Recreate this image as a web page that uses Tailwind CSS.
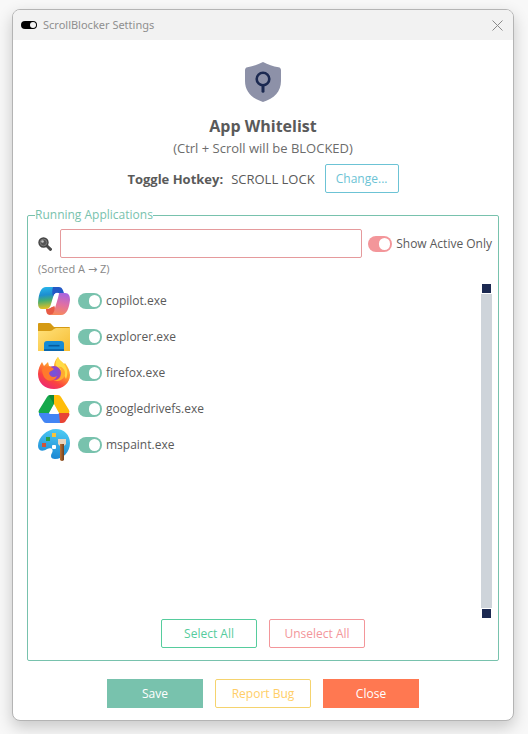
<!DOCTYPE html>
<html lang="en">
<head>
<meta charset="utf-8">
<meta name="viewport" content="width=device-width, initial-scale=1">
<title>ScrollBlocker Settings</title>
<script src="https://cdn.jsdelivr.net/npm/@tailwindcss/browser@4"></script>
</head>
<body class="flex min-h-screen flex-col bg-[#f8f8f8] pt-[9px] pr-[14px] pb-[13px] pl-3 font-['Open_Sans','Noto_Sans',sans-serif] text-xs leading-4 text-[#5a5a5a]">
<div class="flex flex-1 flex-col overflow-hidden rounded-lg border border-[#b4b4b4] bg-white shadow-[0_6px_16px_rgba(0,0,0,0.2)]">
  <header class="flex h-[30px] items-center bg-[#f2f2f2] pr-[9px] pl-2 text-[#8f8f8f]">
    <svg class="h-2 w-4" viewBox="0 0 16 8" aria-hidden="true"><rect width="16" height="8" rx="4" fill="#000"/><circle cx="12" cy="4" r="3" fill="#f2f2f2"/></svg>
    <h1 class="ml-1.5 flex-1 font-['Noto_Sans','Open_Sans',sans-serif] text-[11px]">ScrollBlocker Settings</h1>
    <button type="button" aria-label="Close window" class="p-px"><svg class="size-[11px]" viewBox="0 0 11 11" fill="none" stroke="#8a8a8a" stroke-width="1" aria-hidden="true"><path d="M.5.5l10 10M10.500.5l-10 10"/></svg></button>
  </header>

  <main class="flex flex-1 flex-col px-3.5 pt-[22px] pb-3">
    <section class="flex flex-col items-center">
      <svg class="h-10 w-9" viewBox="0 0 36 40" fill="none" aria-hidden="true">
        <path d="M18 0c5 2.600 10 4.400 15.500 5.200 1.600.3 2.500 1.400 2.500 3V19c0 10.500-7 17.800-18 21C7 36.800 0 29.500 0 19V8.200c0-1.600.9-2.700 2.500-3C8 4.400 13 2.600 18 0z" fill="#8d91a8"/>
        <circle cx="18" cy="17" r="6.300" stroke="#1b2951" stroke-width="2.600"/>
        <path d="M18 23.500v5.700" stroke="#1b2951" stroke-width="3" stroke-linecap="round"/>
      </svg>
      <h2 class="mt-3 text-base leading-6 font-bold">App Whitelist</h2>
      <p class="mt-[2px] text-[13px] text-[#6c6c6c]">(Ctrl + Scroll will be BLOCKED)</p>
      <div class="mt-2 flex items-center">
        <span class="text-[13px] font-bold">Toggle Hotkey:</span>
        <span class="ml-2 text-[13px]">SCROLL LOCK</span>
        <button type="button" class="ml-2.5 h-[29px] w-[74px] rounded-xs border border-[#6cc3d5] text-[#6cc3d5]">Change...</button>
      </div>
    </section>

    <fieldset class="mt-3.5 flex flex-1 flex-col rounded-xs border border-[#78c2ad] px-1.5 pb-3">
      <legend class="ml-px text-[#78c2ad]">Running Applications</legend>
      <div class="mt-1.5 flex items-center pl-1">
        <label for="search" aria-label="Search applications">
          <svg class="size-[14px]" viewBox="0 0 14 14" aria-hidden="true"><path d="M8.500 8.500l4 3.800" stroke="#4b4b4b" stroke-width="3" stroke-linecap="round"/><circle cx="5.500" cy="5.500" r="4.500" fill="#555" stroke="#444" stroke-width="1.400"/><circle cx="5.500" cy="5.500" r="3.300" fill="none" stroke="#888" stroke-width=".7"/><circle cx="4.500" cy="4.500" r="1.300" fill="#c4c4c4"/></svg>
        </label>
        <input id="search" type="text" class="ml-2 h-[29px] min-w-0 flex-1 rounded-xs border border-[#e59a9c] px-2 outline-none">
        <label class="ml-1.5 flex items-center gap-1">
          <input type="checkbox" checked class="flex h-4 w-6 shrink-0 appearance-none items-center justify-end rounded-full bg-[#f3969a] pr-0.5 before:h-3 before:w-[11px] before:rounded-full before:bg-white">
          <span>Show Active Only</span>
        </label>
      </div>
      <p class="mt-[3px] h-4 pl-1 text-[11px] text-[#888]">(Sorted A <span class="font-['DejaVu_Sans',sans-serif]">→</span> Z)</p>
      <div class="mt-1.5 flex h-84">
        <ul class="flex-1 pl-1">
          <li class="flex h-9 items-center">
            <svg class="h-7 w-8" viewBox="0 0 32 28" aria-hidden="true">
              <defs>
                <linearGradient id="ca" x1=".4" y1="0" x2=".5" y2="1"><stop stop-color="#28b4ea"/><stop offset=".35" stop-color="#1d8ed0"/><stop offset=".6" stop-color="#45ad72"/><stop offset="1" stop-color="#f2c21c"/></linearGradient>
                <linearGradient id="cb" x1=".6" y1="0" x2=".4" y2="1"><stop stop-color="#a765e0"/><stop offset=".5" stop-color="#e06fa4"/><stop offset="1" stop-color="#f7895c"/></linearGradient>
              </defs>
              <path d="M8 0h12l-4 7-3 10q-1 5-5 5H4Q0 22 0 16 1 0 8 0z" fill="url(#ca)"/>
              <path d="M15 0h6c3 0 4 3 5 6h-6c-3 0-4 1-5 4-1-4-1-7 0-10z" fill="#2458c5"/>
              <path d="M21 6h6c4 0 5 3 5 7-1 8-3 15-9 15H13l4-7 3-10q1-4 1-5z" fill="url(#cb)"/>
              <path d="M8 22c4 0 6-2 8-4l1 3c-1 4-2 7-5 7s-4-3-4-6z" fill="#e75b45"/>
              <path d="M16 8q2-3 4-2l-2 10q-1 4-5 4z" fill="#fff"/>
            </svg>
            <label class="ml-2 flex items-center gap-1"><input type="checkbox" checked class="flex h-4 w-6 appearance-none items-center justify-end rounded-full bg-[#78c2ad] pr-0.5 before:h-3 before:w-[11px] before:rounded-full before:bg-white"><span>copilot.exe</span></label>
          </li>
          <li class="flex h-9 items-center">
            <svg class="h-7 w-8" viewBox="0 0 32 28" aria-hidden="true">
              <defs><linearGradient id="fo" x1="0" y1="0" x2="1" y2="1"><stop stop-color="#ffe17b"/><stop offset="1" stop-color="#f7bd32"/></linearGradient></defs>
              <path d="M0 1q0-1 1-1h10q2 0 3 2l2 2h15q1 0 1 1v6H0z" fill="#d59a13"/>
              <path d="M0 8h12q2 0 4-2l2-1h14v23H0z" fill="url(#fo)"/>
              <path d="M6 28v-7q0-3 3-3h14q3 0 3 3v7z" fill="#168bd5"/><path d="M6 26h20v2H6z" fill="#0b67ad"/>
              <path d="M10.500 22.700h11" stroke="#075b9c" stroke-width="1.600"/>
            </svg>
            <label class="ml-2 flex items-center gap-1"><input type="checkbox" checked class="flex h-4 w-6 appearance-none items-center justify-end rounded-full bg-[#78c2ad] pr-0.5 before:h-3 before:w-[11px] before:rounded-full before:bg-white"><span>explorer.exe</span></label>
          </li>
          <li class="flex h-9 items-center">
            <svg class="size-8" viewBox="0 0 32 32" aria-hidden="true">
              <defs>
                <linearGradient id="fx" x1=".8" y1="0" x2=".2" y2="1"><stop stop-color="#ffd43b"/><stop offset=".4" stop-color="#ff982d"/><stop offset=".7" stop-color="#fb443f"/><stop offset="1" stop-color="#e9247d"/></linearGradient>
                <radialGradient id="fp"><stop stop-color="#6f55df"/><stop offset="1" stop-color="#9b42be"/></radialGradient>
              </defs>
              <path d="M20 0c1 3 3 4 6 7l1-1c3 4 5 8 5 12 0 8-7 14-16 14S0 26 0 17C0 12 2 8 4 5l2 4 4-4 1 4 5 1C16 6 17 3 20 0z" fill="url(#fx)"/>
              <path d="M20 0c1 3 3 4 6 7 4 5 4 10 2 15-2-4-3-8-8-11-4-2-2-8 0-11z" fill="#ffdb45"/>
              <circle cx="16" cy="16" r="7" fill="url(#fp)"/>
              <path d="M4 12c3-3 6-3 9-2l3 2c-2 2-4 2-5 4 1 4 4 5 8 3-2 6-10 6-13 1-1-2-2-5-2-8z" fill="#ff7a2c"/>
              <path d="M20 10c3 1 4 4 3 7 0 5-4 7-8 6 7 3 13-2 12-8-1-4-4-6-7-5z" fill="#ffad2f"/>
            </svg>
            <label class="ml-2 flex items-center gap-1"><input type="checkbox" checked class="flex h-4 w-6 appearance-none items-center justify-end rounded-full bg-[#78c2ad] pr-0.5 before:h-3 before:w-[11px] before:rounded-full before:bg-white"><span>firefox.exe</span></label>
          </li>
          <li class="flex h-9 items-center">
            <svg class="h-7 w-8" viewBox="0 0 32 28" aria-hidden="true">
              <path d="M12 0h4v9l-5 9H1q-1-1 0-3L9 2q1-2 3-2z" fill="#16a84c"/>
              <path d="M12 0h6l-2 9-5-8z" fill="#118738"/>
              <path d="M16 0h4q2 0 3 2l8 13q1 2 0 3H21l-5-9z" fill="#ffbd09"/>
              <path d="M1 18h21v10H8q-2 0-3-2l-4-6z" fill="#4285f4"/>
              <path d="M21 18h10q1 1 0 3l-4 6q-1 1-3 1h-2z" fill="#e84435"/>
              <path d="M16 10l5 9H11z" fill="#fff"/>
            </svg>
            <label class="ml-2 flex items-center gap-1"><input type="checkbox" checked class="flex h-4 w-6 appearance-none items-center justify-end rounded-full bg-[#78c2ad] pr-0.5 before:h-3 before:w-[11px] before:rounded-full before:bg-white"><span>googledrivefs.exe</span></label>
          </li>
          <li class="flex h-9 items-center">
            <svg class="size-8" viewBox="0 0 32 32" aria-hidden="true">
              <defs>
                <linearGradient id="pa" x1=".6" y1="0" x2=".4" y2="1"><stop stop-color="#4dcaf3"/><stop offset="1" stop-color="#1a86d3"/></linearGradient>
                <linearGradient id="br"><stop stop-color="#bd7336"/><stop offset="1" stop-color="#70401e"/></linearGradient>
              </defs>
              <path d="M18 0c8 0 14 6 14 14 0 9-7 16-15 16-4 0-5-3-3-6 2-4-1-6-5-4-4 3-9 2-9-3C0 8 9 0 18 0z" fill="url(#pa)"/>
              <rect x="14" y="4" width="4" height="4" fill="#f6c33b"/><rect x="8" y="8" width="4" height="4" fill="#2a9f45"/><rect x="4" y="14" width="4" height="4" fill="#cf533a"/>
              <rect x="14" y="16" width="4" height="4" rx="1" fill="#fff"/>
              <path d="M20 10h8v5l-2 2h-4l-2-2z" fill="#e8d4be"/><path d="M22 15h4v16q-2 2-4 0z" fill="url(#br)"/>
            </svg>
            <label class="ml-2 flex items-center gap-1"><input type="checkbox" checked class="flex h-4 w-6 appearance-none items-center justify-end rounded-full bg-[#78c2ad] pr-0.5 before:h-3 before:w-[11px] before:rounded-full before:bg-white"><span>mspaint.exe</span></label>
          </li>
        </ul>
        <div class="my-px flex w-[11px] flex-col items-center gap-px" aria-hidden="true">
          <span class="size-[9px] bg-[#1b2951]"></span>
          <span class="w-full flex-1 bg-[#ced4da]"></span>
          <span class="size-[9px] bg-[#1b2951]"></span>
        </div>
      </div>
      <div class="flex justify-center gap-3">
        <button type="button" class="h-[29px] w-24 rounded-xs border border-[#56cc9d] text-[#56cc9d]">Select All</button>
        <button type="button" class="h-[29px] w-24 rounded-xs border border-[#f3969a] text-[#f3969a]">Unselect All</button>
      </div>
    </fieldset>

    <footer class="mt-[18px] flex justify-center gap-3">
      <button type="button" class="h-[29px] w-24 bg-[#78c2ad] text-white">Save</button>
      <button type="button" class="h-[29px] w-24 rounded-xs border border-[#f5d36e] text-[#ffce67]">Report Bug</button>
      <button type="button" class="h-[29px] w-24 bg-[#ff7851] text-white">Close</button>
    </footer>
  </main>
</div>
</body>
</html>
